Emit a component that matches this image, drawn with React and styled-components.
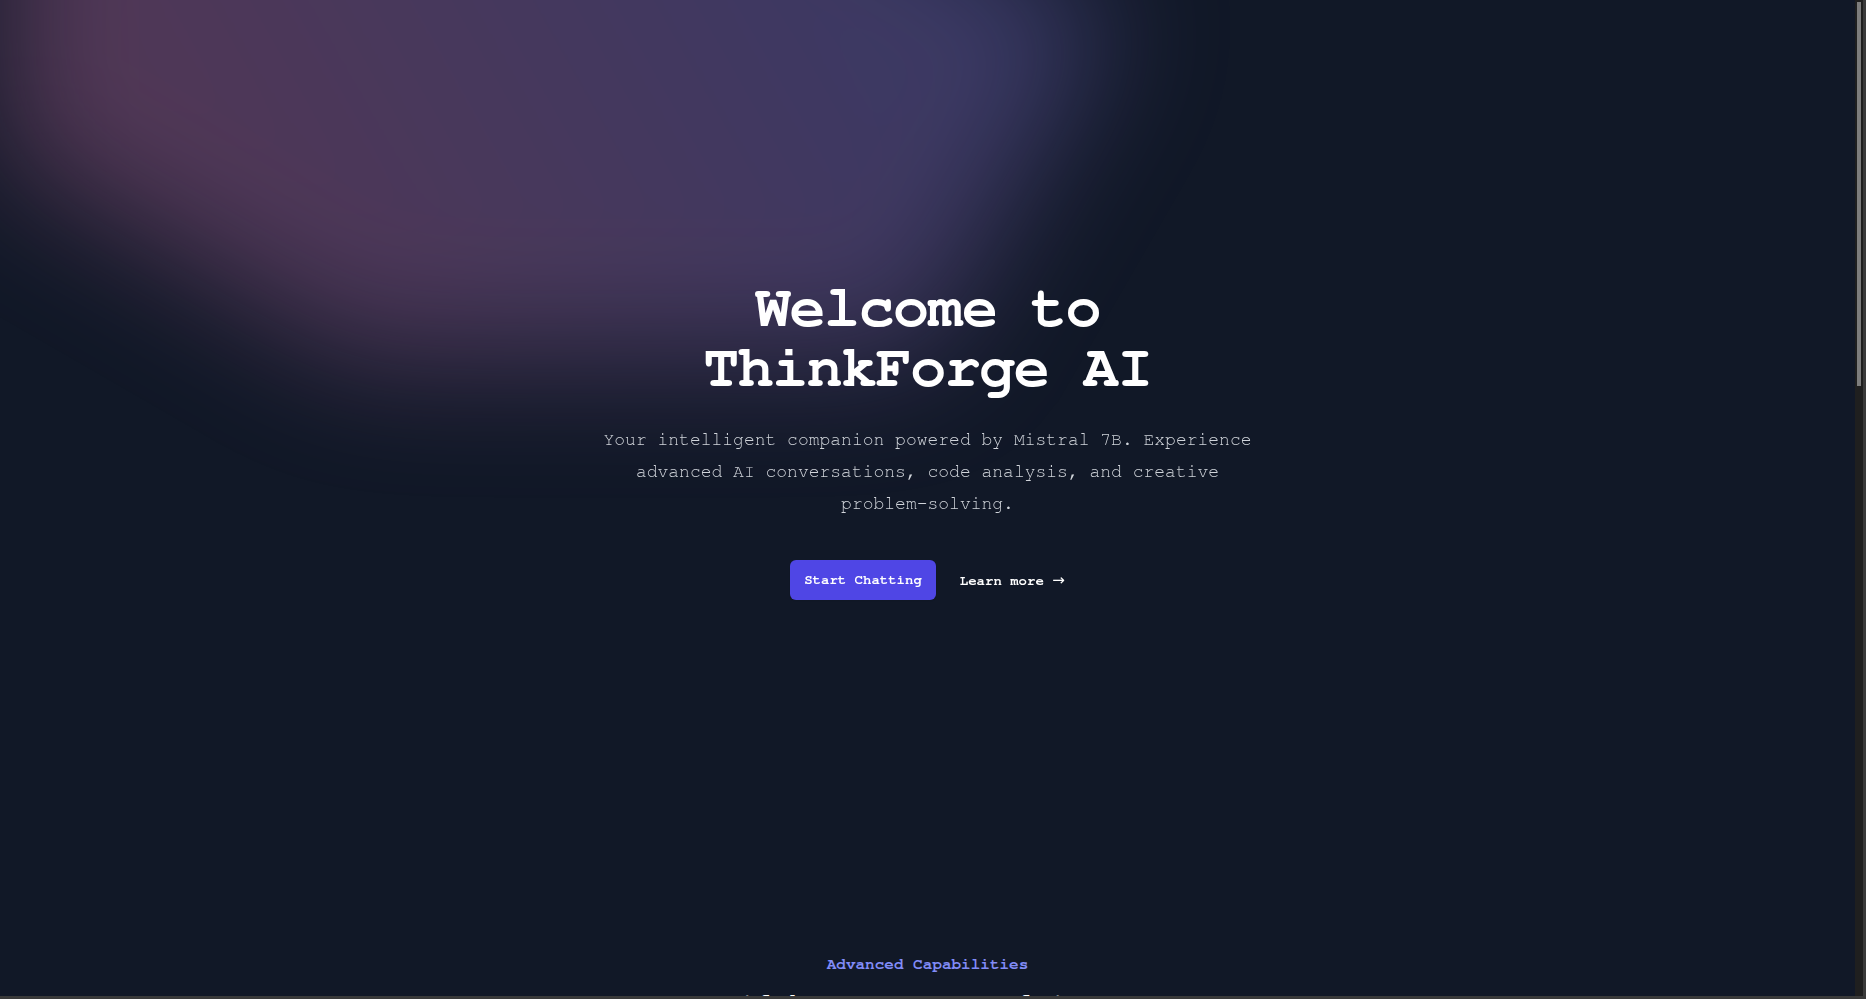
import React from 'react';
import styled, { createGlobalStyle } from 'styled-components';

const Global = createGlobalStyle`
  html, body {
    margin: 0;
    padding: 0;
    height: 100%;
    overflow: hidden;
    background: #111827;
  }
  #root { height: 100%; }
  *, *::before, *::after { box-sizing: border-box; }
`;

const Window = styled.div`
  display: flex;
  flex-direction: column;
  width: 100vw;
  height: 100vh;
  background: #3a3a3a;
`;

const Frame = styled.div`
  display: flex;
  flex: 1;
  min-height: 0;
`;

const Viewport = styled.main`
  flex: 1;
  min-width: 0;
  overflow: hidden;
  background: #111827;
  font-family: "Nimbus Mono PS", "Nimbus Mono L", "FreeMono", "Courier 10 Pitch", "Liberation Mono", "Courier New", monospace;
  color: #fff;
`;

const Gutter = styled.div`
  width: 11px;
  display: flex;
  background: #3a3a3a;
  padding-right: 3px;
`;

const Track = styled.div`
  flex: 1;
  background: #1f1f1f;
  padding: 2px 2px 0 2px;
`;

const Thumb = styled.div`
  height: 384px;
  background: #7d7d7d;
`;

const BottomEdge = styled.div`
  height: 3px;
  background: #3a3a3a;
`;

const Hero = styled.section`
  position: relative;
  isolation: isolate;
  padding: 56px 32px 0;
`;

const BlobClip = styled.div`
  position: absolute;
  left: 0;
  right: 0;
  top: -320px;
  z-index: -10;
  overflow: hidden;
  filter: blur(64px);
  transform: translateZ(0);
  pointer-events: none;
`;

const Blob = styled.div`
  position: relative;
  left: calc(50% - 30rem);
  aspect-ratio: 1155 / 678;
  width: 72.1875rem;
  transform: translateX(-50%) rotate(30deg);
  background-image: linear-gradient(to top right, #ff80b5, #9089fc);
  opacity: 0.3;
`;

const HeroInner = styled.div`
  max-width: 42rem;
  margin: 0 auto;
  padding: 224px 0;
  text-align: center;
`;

const Title = styled.h1`
  margin: -2px 0 0;
  font-size: 60px;
  line-height: 1;
  font-weight: 700;
  letter-spacing: -0.025em;
  color: #ffffff;
`;

const Lead = styled.p`
  margin: 26px 0 0;
  font-size: 18px;
  line-height: 32px;
  color: #d1d5db;
`;

const Actions = styled.div`
  margin-top: 40px;
  display: flex;
  align-items: center;
  justify-content: center;
  gap: 24px;
`;

const PrimaryButton = styled.a`
  display: inline-block;
  border-radius: 6px;
  background: #4f46e5;
  padding: 10px 14px;
  font-size: 14px;
  line-height: 20px;
  font-weight: 700;
  color: #ffffff;
  text-decoration: none;
  box-shadow: 0 1px 2px rgba(0, 0, 0, 0.05);
`;

const TextLink = styled.a`
  font-size: 14px;
  line-height: 24px;
  font-weight: 700;
  color: #ffffff;
  text-decoration: none;
`;

const Arrow = styled.span`
  font-family: "DejaVu Sans", sans-serif;
  font-size: 15px;
  font-weight: 400;
`;

const Features = styled.section`
  padding: 126px 32px 128px;
`;

const FeaturesInner = styled.div`
  max-width: 80rem;
  margin: 0 auto;
`;

const FeaturesHeader = styled.div`
  max-width: 42rem;
  margin: 0 auto;
  text-align: center;
`;

const Eyebrow = styled.h2`
  margin: 0;
  font-size: 16px;
  line-height: 28px;
  font-weight: 700;
  color: #818cf8;
`;

const SectionTitle = styled.p`
  margin: 8px 0 0;
  font-size: 36px;
  line-height: 40px;
  font-weight: 700;
  letter-spacing: -0.025em;
  color: #ffffff;
`;

const SectionText = styled.p`
  margin: 24px 0 0;
  font-size: 18px;
  line-height: 32px;
  color: #d1d5db;
`;

export default function App() {
  return (
    <>
      <Global />
      <Window>
        <Frame>
          <Viewport>
            <Hero>
              <BlobClip aria-hidden="true">
                <Blob />
              </BlobClip>
              <HeroInner>
                <Title>Welcome to ThinkForge AI</Title>
                <Lead>
                  Your intelligent companion powered by Mistral 7B. Experience advanced AI
                  conversations, code analysis, and creative problem-solving.
                </Lead>
                <Actions>
                  <PrimaryButton href="#chat">Start Chatting</PrimaryButton>
                  <TextLink href="#features">
                    Learn more <Arrow aria-hidden="true">→</Arrow>
                  </TextLink>
                </Actions>
              </HeroInner>
            </Hero>
            <Features id="features">
              <FeaturesInner>
                <FeaturesHeader>
                  <Eyebrow>Advanced Capabilities</Eyebrow>
                  <SectionTitle>Everything you need to power smarter conversations</SectionTitle>
                  <SectionText>
                    From natural dialogue to code review, ThinkForge AI brings the reasoning of
                    Mistral 7B to every task.
                  </SectionText>
                </FeaturesHeader>
              </FeaturesInner>
            </Features>
          </Viewport>
          <Gutter>
            <Track>
              <Thumb />
            </Track>
          </Gutter>
        </Frame>
        <BottomEdge />
      </Window>
    </>
  );
}
